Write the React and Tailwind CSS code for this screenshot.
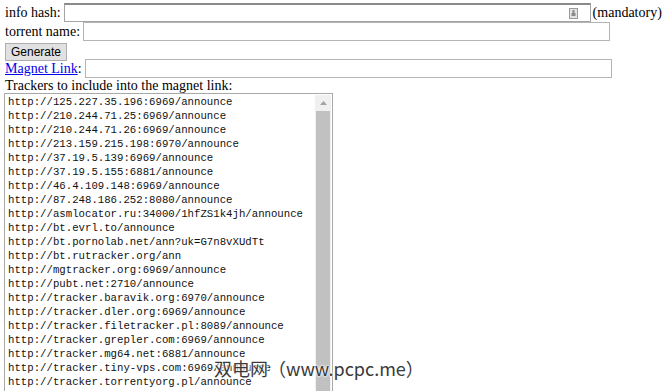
const trackers = [
  "http://125.227.35.196:6969/announce",
  "http://210.244.71.25:6969/announce",
  "http://210.244.71.26:6969/announce",
  "http://213.159.215.198:6970/announce",
  "http://37.19.5.139:6969/announce",
  "http://37.19.5.155:6881/announce",
  "http://46.4.109.148:6969/announce",
  "http://87.248.186.252:8080/announce",
  "http://asmlocator.ru:34000/1hfZS1k4jh/announce",
  "http://bt.evrl.to/announce",
  "http://bt.pornolab.net/ann?uk=G7n8vXUdTt",
  "http://bt.rutracker.org/ann",
  "http://mgtracker.org:6969/announce",
  "http://pubt.net:2710/announce",
  "http://tracker.baravik.org:6970/announce",
  "http://tracker.dler.org:6969/announce",
  "http://tracker.filetracker.pl:8089/announce",
  "http://tracker.grepler.com:6969/announce",
  "http://tracker.mg64.net:6881/announce",
  "http://tracker.tiny-vps.com:6969/announce",
  "http://tracker.torrentyorg.pl/announce",
];

function KeyIcon() {
  return (
    <svg width="9" height="11" viewBox="0 0 9 11">
      <rect x="0.5" y="0.5" width="8" height="10" fill="#e4e4e4" stroke="#9a9a9a" />
      <rect x="3.5" y="2" width="2" height="3" fill="#8a8a8a" />
      <rect x="2.5" y="5" width="4" height="3" fill="#8a8a8a" />
    </svg>
  );
}

export default function App() {
  return (
    <div className="relative w-[670px] h-[391px] overflow-hidden bg-white text-black font-['Liberation_Serif',serif] text-[14px] pl-[4px]">
      <div className="flex items-center h-[19px] mt-[3px] pl-[1px]">
        <span className="mr-[3px]">info hash:</span>
        <div className="w-[527px] h-[19px] border border-[#a4a4a4] border-t-2 border-t-[#8a8a8a] bg-white flex items-center justify-end pr-[12px]">
          <KeyIcon />
        </div>
        <span className="ml-[2px]">(mandatory)</span>
      </div>

      <div className="flex items-center h-[19px] pl-[1px]">
        <span className="mr-[3px]">torrent name:</span>
        <div className="w-[527px] h-[19px] border border-[#b4b4b4] bg-white" />
      </div>

      <div className="h-[18px] pl-[1px]">
        <button className="w-[62px] h-[18px] bg-[#e1e1e1] border border-[#adadad] font-['Liberation_Sans',sans-serif] text-[12px] leading-[16px] text-black">
          Generate
        </button>
      </div>

      <div className="flex items-center h-[19px] pl-[1px]">
        <a href="#" className="text-[#0000ee] underline">
          Magnet Link
        </a>
        <span className="mr-[3px]">:</span>
        <div className="w-[527px] h-[19px] border border-[#b4b4b4] bg-white" />
      </div>

      <div className="h-[15px] leading-[15px] pl-[1px]">
        Trackers to include into the magnet link:
      </div>

      <div className="flex w-[329px] h-[320px] border border-[#a9a9a9] bg-white">
        <div className="flex-1 overflow-hidden pl-[3px] pt-[1px] font-['Liberation_Mono',monospace] text-[10.7px] leading-[14px] text-[#111]">
          {trackers.map((t) => (
            <div key={t} className="whitespace-nowrap">
              {t}
            </div>
          ))}
        </div>
        <div className="w-[16px] flex flex-col bg-[#f0f0f0] mr-[1px] mt-[1px]">
          <div className="h-[16px] flex items-center justify-center">
            <svg width="7" height="4" viewBox="0 0 7 4">
              <path d="M0 4 L3.5 0 L7 4 Z" fill="#a3a3a3" />
            </svg>
          </div>
          <div className="flex-1 bg-[#c1c1c1] mx-[1px]" />
        </div>
      </div>

      <div className="absolute left-[214px] top-[356px] font-['Noto_Sans_CJK_SC',sans-serif] text-[18px] leading-[24px] text-[#3a3a3a] [text-shadow:0_0_2px_#fff,0_0_2px_#fff,0_0_3px_#fff]">
        双电网（www.pcpc.me）
      </div>
    </div>
  );
}
